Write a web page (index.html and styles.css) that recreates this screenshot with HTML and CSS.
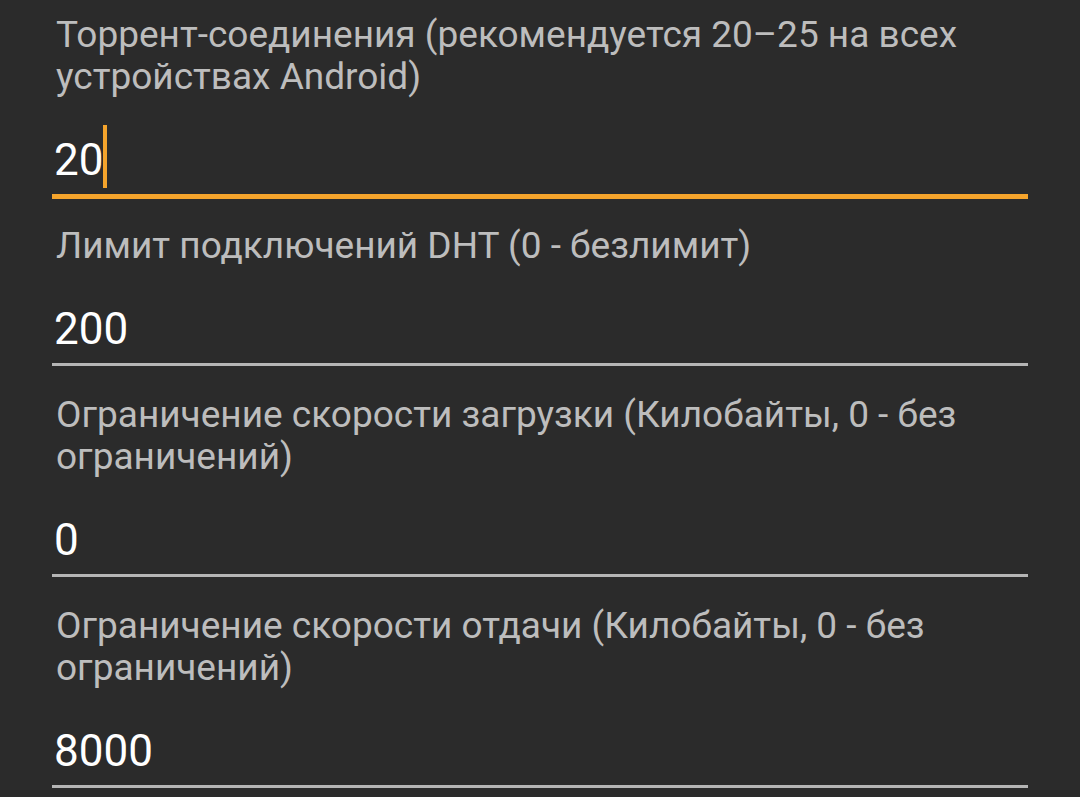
FILE: index.html
```html
<!DOCTYPE html>
<html lang="ru">
<head>
  <meta charset="UTF-8">
  <meta name="viewport" content="width=device-width, initial-scale=1.0">
  <title>Настройки торрентов</title>
<link rel="stylesheet" href="styles.css">
</head>
<body>

<div class="settings">
  <div class="field">
    <div class="label">Торрент-соединения (рекомендуется 20–25 на всех устройствах Android)</div>
    <div class="value focused">20<span class="caret"></span></div>
  </div>

  <div class="field">
    <div class="label">Лимит подключений DHT (0 - безлимит)</div>
    <div class="value">200</div>
  </div>

  <div class="field">
    <div class="label">Ограничение скорости загрузки (Килобайты, 0 - без ограничений)</div>
    <div class="value">0</div>
  </div>

  <div class="field">
    <div class="label">Ограничение скорости отдачи (Килобайты, 0 - без ограничений)</div>
    <div class="value">8000</div>
  </div>
</div>

</body>
</html>
```

FILE: styles.css
```css
body {
  overflow: hidden;

  font-family: Roboto, 'Noto Sans', sans-serif;
  background-color: #2b2b2b;

  margin: 0px;
}

.settings {
  display: flex;
  flex-direction: column;
  gap: 28px;
  padding: 14px 52px 0px 52px;
}

.field {
  display: flex;
  flex-direction: column;
}

.label {
  font-size: 37px;
  line-height: 42px;
  color: #bdbdbd;
  padding-left: 4px;
}

.value {
  font-size: 44px;
  line-height: 52px;
  color: #ffffff;
  padding: 36px 0px 8px 2px;
  border-bottom: 3px solid #b5b5b5;
}

.value.focused {
  border-bottom: 5px solid #f5a42c;
  margin-bottom: -2px;
}

/* text cursor, negative margins keep it from growing the line box */
.caret {
  display: inline-block;
  width: 4px;
  height: 63px;
  margin: -11px 0px -2px 0px;
  background-color: #f5a42c;
  vertical-align: -11px;
}
```
